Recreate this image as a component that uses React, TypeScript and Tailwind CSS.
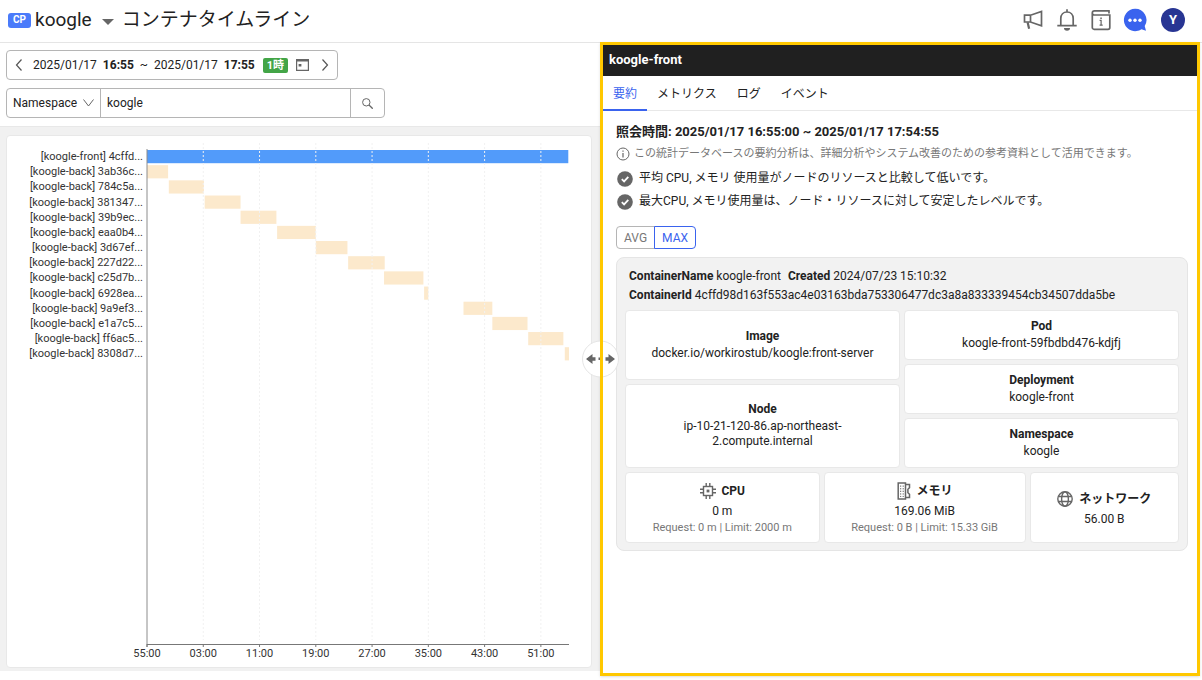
import { useState } from 'react';
import type { ReactNode } from 'react';

interface Bar {
  label: string;
  start: number;
  end: number;
  front?: boolean;
}

// start / end are minutes from 16:55
const bars: Bar[] = [
  { label: '[koogle-front] 4cffd...', start: 0, end: 59.9, front: true },
  { label: '[koogle-back] 3ab36c...', start: 0, end: 3 },
  { label: '[koogle-back] 784c5a...', start: 3.1, end: 8.1 },
  { label: '[koogle-back] 381347...', start: 8.2, end: 13.3 },
  { label: '[koogle-back] 39b9ec...', start: 13.3, end: 18.4 },
  { label: '[koogle-back] eaa0b4...', start: 18.5, end: 24 },
  { label: '[koogle-back] 3d67ef...', start: 24, end: 28.5 },
  { label: '[koogle-back] 227d22...', start: 28.6, end: 33.8 },
  { label: '[koogle-back] c25d7b...', start: 33.7, end: 39.3 },
  { label: '[koogle-back] 6928ea...', start: 39.4, end: 40 },
  { label: '[koogle-back] 9a9ef3...', start: 45, end: 49.1 },
  { label: '[koogle-back] e1a7c5...', start: 49.1, end: 54.1 },
  { label: '[koogle-back] ff6ac5...', start: 54.2, end: 59.2 },
  { label: '[koogle-back] 8308d7...', start: 59.4, end: 60 },
];

const ticks = ['55:00', '03:00', '11:00', '19:00', '27:00', '35:00', '43:00', '51:00'];
const tabs = ['要約', 'メトリクス', 'ログ', 'イベント'];

const PLOT_LEFT = 140;
const PLOT_WIDTH = 422;
const AXIS_Y = 508;
const ROW = 15.17;

const toX = (minutes: number) => PLOT_LEFT + (minutes / 60) * PLOT_WIDTH;

function TimelineChart() {
  return (
    <svg viewBox="0 0 584 531" className="block w-full" role="img" aria-label="コンテナタイムライン">
      {bars.map((bar, i) => (
        <g key={bar.label}>
          <text x="136" y={24 + i * ROW} textAnchor="end" fontSize="11" fill="#333">
            {bar.label}
          </text>
          <rect
            x={toX(bar.start)}
            y={14 + i * ROW}
            width={toX(bar.end) - toX(bar.start)}
            height="13.2"
            fill={bar.front ? '#529bfa' : '#fce9cc'}
          />
        </g>
      ))}
      <path d={`M${PLOT_LEFT} 13V${AXIS_Y + 3}`} stroke="#8c8c8c" />
      <path d={`M${PLOT_LEFT} ${AXIS_Y + 0.5}H${PLOT_LEFT + PLOT_WIDTH}`} stroke="#777" />
      {ticks.map((tick, i) => {
        const x = toX(i * 8);
        return (
          <g key={tick}>
            {i > 0 && <path d={`M${x} 7V${AXIS_Y - 4}`} stroke="#f1f1f1" strokeDasharray="2 2" />}
            <path d={`M${x} ${AXIS_Y}v3`} stroke="#777" />
            <text x={x} y="521" textAnchor="middle" fontSize="11" fill="#333">
              {tick}
            </text>
          </g>
        );
      })}
    </svg>
  );
}

function MegaphoneIcon() {
  return (
    <svg width="24" height="24" viewBox="0 0 24 24" fill="none" stroke="#666" strokeWidth="1.7">
      <path d="M3.500 7.200h6L20.500 3.500v14.200L9.500 14h-6zM9.500 7.200V14" />
      <path d="M6.600 14.200l1.500 6.600" strokeWidth="2.200" />
    </svg>
  );
}

function BellIcon() {
  return (
    <svg width="24" height="24" viewBox="0 0 24 24" fill="none" stroke="#666" strokeWidth="1.7">
      <path d="M2.300 17.700h19.400M5.800 17.700v-7.200c0-3.800 2.600-6.500 6.200-6.500s6.200 2.700 6.200 6.500v7.200M12 4V1.300" />
      <path d="M9 20h6a3 2.800 0 0 1-6 0z" fill="#666" stroke="none" />
    </svg>
  );
}

function GuideIcon() {
  return (
    <svg width="24" height="24" viewBox="0 0 24 24" fill="none" stroke="#666" strokeWidth="1.700">
      <path d="M20.800 2.800H5.500a2.200 2.200 0 0 0-2.200 2.200v14.500a1.800 1.800 0 0 0 1.800 1.800h13.900a1.800 1.800 0 0 0 1.800-1.800V7H5.200a2 2 0 0 1-1.900-2M20 3v2.500" />
      <path d="M10.600 12.300h1.500v4.500M10.600 17.100h3.100" strokeWidth="1.200" />
      <path d="M11.300 9.600h1.500v1.400h-1.500z" fill="#666" stroke="none" />
    </svg>
  );
}

function ChatIcon() {
  return (
    <svg width="24" height="24" viewBox="0 0 24 24">
      <path d="M12 .8a11.200 11.200 0 1 0 6.500 20.400l4.500 1.500-1.300-4.700A11.200 11.200 0 0 0 12 .8z" fill="#3a63ee" />
      <g fill="#fff">
        <circle cx="7" cy="12.300" r="1.700" />
        <circle cx="12" cy="12.300" r="1.700" />
        <circle cx="17" cy="12.300" r="1.700" />
      </g>
    </svg>
  );
}

function Chevron({ d, label }: { d: string; label: string }) {
  return (
    <button aria-label={label} className="flex items-center">
      <svg width="8" height="14" viewBox="0 0 8 14" fill="none" stroke="#555" strokeWidth="1.200">
        <path d={d} />
      </svg>
    </button>
  );
}

function CheckIcon() {
  return (
    <svg width="16" height="16" viewBox="0 0 16 16" className="shrink-0">
      <circle cx="8" cy="8" r="7.800" fill="#666" />
      <path d="M4.800 8.200l2.300 2.200 4.200-4.500" fill="none" stroke="#fff" strokeWidth="1.800" />
    </svg>
  );
}

function CpuIcon() {
  return (
    <svg width="16" height="16" viewBox="0 0 16 16" fill="none" stroke="#666" strokeWidth="1.400">
      <rect x="3.500" y="3.500" width="9" height="9" />
      <path d="M6.200 0v3.500M9.800 0v3.500M6.200 12.500V16M9.800 12.500V16M0 6.200h3.500M0 9.800h3.500M12.500 6.200H16M12.500 9.800H16" />
      <path d="M6.600 6.600h2.800v2.800H6.600z" fill="#666" stroke="none" />
    </svg>
  );
}

function MemoryIcon() {
  return (
    <svg width="14" height="18" viewBox="0 0 14 18" fill="none" stroke="#666" strokeWidth="1.500">
      <path d="M1.200 1h7.300v16H1.200zM8.500 2.500h4v3.200l-1.600 1.600v3.400l1.600 1.600v3.200h-4" />
      <path d="M3.700 3.500v11.500M6.200 3.500v11.500" strokeDasharray="1.300 1.300" strokeWidth="1" />
    </svg>
  );
}

function NetworkIcon() {
  return (
    <svg width="16" height="16" viewBox="0 0 16 16" fill="none" stroke="#666" strokeWidth="1.400">
      <circle cx="8" cy="8" r="7.200" />
      <ellipse cx="8" cy="8" rx="3.400" ry="7.200" />
      <path d="M1.300 5.500h13.400M1.300 10.500h13.400" />
    </svg>
  );
}

function InfoCard({ title, value }: { title: string; value: string }) {
  return (
    <div className="flex flex-auto flex-col items-center justify-center rounded-sm border border-[#e8e8e8] bg-white px-2 py-2 text-center text-xs leading-[15px]">
      <h3 className="mb-0.5 font-bold">{title}</h3>
      <p className="max-w-60">{value}</p>
    </div>
  );
}

function UsageCard({ icon, title, value, note }: { icon: ReactNode; title: string; value: string; note?: string }) {
  return (
    <div className="flex flex-auto flex-col items-center justify-center rounded-sm border border-[#e8e8e8] bg-white py-1.5 text-xs">
      <h3 className="flex h-[23px] items-center gap-1.5 font-bold">
        {icon}
        {title}
      </h3>
      <p className="leading-[18px]">{value}</p>
      {note && <p className="text-[11px] leading-4 text-[#777]">{note}</p>}
    </div>
  );
}

export default function App() {
  const [tab, setTab] = useState('要約');
  const [mode, setMode] = useState('MAX');
  const [field, setField] = useState('Namespace');
  const [keyword, setKeyword] = useState('koogle');

  return (
    <div lang="ja" className="flex min-h-screen flex-col bg-white font-[Roboto,'Noto_Sans_CJK_JP',sans-serif] text-xs text-[#222]">
      {/* Header */}
      <header className="flex h-[43px] items-center border-b border-[#e5e5e5] pr-[17px] pb-0.5 pl-2">
        <button className="flex items-center">
          <span className="flex h-[15px] w-[23px] items-center justify-center rounded-[3px] bg-[#4a7bfa] text-[10px] font-bold text-white">
            CP
          </span>
          <span className="ml-1 text-[19px] leading-6">koogle</span>
          <svg width="12" height="6" viewBox="0 0 12 6" className="mt-1 ml-2.5">
            <path d="M0 0h12L6 6z" fill="#666" />
          </svg>
        </button>
        <h1 className="ml-2 text-[19px] leading-6">コンテナタイムライン</h1>
        <div className="ml-auto flex items-center gap-2.5">
          <button aria-label="お知らせ"><MegaphoneIcon /></button>
          <button aria-label="通知"><BellIcon /></button>
          <button aria-label="ガイド"><GuideIcon /></button>
          <button aria-label="チャット"><ChatIcon /></button>
          <button className="ml-1 flex size-6 items-center justify-center rounded-full bg-[#283593] text-[13px] font-bold text-white">
            Y
          </button>
        </div>
      </header>

      <main className="grid flex-1 grid-cols-2 pr-0.5">
        {/* Timeline */}
        <section className="mb-[9px] flex min-w-0 flex-col bg-[#f1f1f1]">
          <div className="flex flex-col items-start gap-2 border-b border-[#e8e8e8] bg-white px-1.5 pt-[7px] pb-2">
            <div className="flex h-[30px] items-center rounded-sm border border-[#b5b5b5] px-2">
              <Chevron d="M6.500 1.500L1.500 7l5 5.500" label="前へ" />
              <span className="ml-2.5">2025/01/17</span>
              <b className="ml-1.5">16:55</b>
              <span className="mx-1.5">~</span>
              <span>2025/01/17</span>
              <b className="ml-1.5">17:55</b>
              <span className="ml-2 rounded-xs bg-[#43a547] px-1 text-[11px] leading-[15px] font-bold text-white">1時</span>
              <button aria-label="カレンダー" className="ml-2">
                <svg width="13" height="12" viewBox="0 0 13 12" fill="none" stroke="#666" strokeWidth="1.200">
                  <path d="M.6.6h11.800v10.800H.6z" />
                  <path d="M0 0h13v2.600H0zM2.600 5h2.800v2.600H2.600z" fill="#666" stroke="none" />
                </svg>
              </button>
              <span className="ml-3 flex">
                <Chevron d="M1.500 1.500l5 5.500-5 5.500" label="次へ" />
              </span>
            </div>
            <form
              className="flex h-[30px] w-[379px] max-w-full rounded-sm border border-[#b5b5b5]"
              onSubmit={(e) => e.preventDefault()}
            >
              <div className="relative flex border-r border-[#b5b5b5]">
                <select
                  aria-label="検索項目"
                  value={field}
                  onChange={(e) => setField(e.target.value)}
                  className="w-[93px] appearance-none pl-1.5 outline-none"
                >
                  <option>Namespace</option>
                </select>
                <svg
                  width="11"
                  height="8"
                  viewBox="0 0 11 8"
                  fill="none"
                  stroke="#666"
                  className="pointer-events-none absolute top-2.5 right-1.5"
                >
                  <path d="M.5.5l5 6.500 5-6.500" />
                </svg>
              </div>
              <input
                aria-label="検索語"
                value={keyword}
                onChange={(e) => setKeyword(e.target.value)}
                className="min-w-0 flex-1 px-1.5 outline-none"
              />
              <button aria-label="検索" className="flex w-[34px] items-center justify-center border-l border-[#b5b5b5]">
                <svg width="11" height="11" viewBox="0 0 11 11" fill="none" stroke="#666">
                  <circle cx="4.300" cy="4.300" r="3.700" />
                  <path d="M7 7l3.700 3.700" strokeWidth="1.300" />
                </svg>
              </button>
            </form>
          </div>
          <div className="pt-2 pr-2 pb-[3px] pl-1.5">
            <div className="rounded-sm border border-[#e8e8e8] bg-white">
              <TimelineChart />
            </div>
          </div>
        </section>

        {/* Detail panel */}
        <aside className="relative -mt-px mb-1 flex min-w-0 flex-col bg-white p-[3px] shadow">
          <div className="pointer-events-none absolute inset-0 z-20 border-3 border-[#ffc800]" />
          <button
            aria-label="幅を変更"
            className="absolute top-1/2 -left-[18px] z-10 flex size-[37px] -translate-y-1/2 items-center justify-center rounded-full border border-[#e5e5e5] bg-white"
          >
            <svg width="29" height="11" viewBox="0 0 29 11" fill="#666">
              <path d="M0 5.500L6.500.5v3.300h3v3.400h-3v3.300zM29 5.500L22.500.5v3.300h-3v3.400h3v3.300zM12.500 4h4v2.600h-4z" />
            </svg>
          </button>

          <h2 className="bg-[#202020] px-1.5 pb-px text-[13px] leading-[30px] font-bold text-white">koogle-front</h2>
          <div role="tablist" className="flex border-b border-[#e8e8e8]">
            {tabs.map((name) => (
              <button
                key={name}
                role="tab"
                aria-selected={tab === name}
                onClick={() => setTab(name)}
                className={`-mb-px h-[35px] border-b-2 px-2.5 pt-0.5 ${
                  tab === name ? 'border-[#3a63ee] text-[#3a63ee]' : 'border-transparent'
                }`}
              >
                {name}
              </button>
            ))}
          </div>

          <div className="pt-[11px] pr-[9px] pb-4 pl-[13px]">
            <p className="text-[13px] leading-5 font-bold">照会時間: 2025/01/17 16:55:00 ~ 2025/01/17 17:54:55</p>
            <p className="mt-0.5 flex items-center gap-1 text-[11px] leading-5 text-[#777]">
              <svg width="14" height="14" viewBox="0 0 14 14" fill="none" stroke="#666" className="shrink-0">
                <circle cx="7" cy="7" r="6" />
                <path d="M7 6v4.500M7 3.500v1.300" strokeWidth="1.200" />
              </svg>
              この統計データベースの要約分析は、詳細分析やシステム改善のための参考資料として活用できます。
            </p>
            <ul className="mt-[3px] px-px leading-[23px]">
              <li className="flex items-center gap-1.5">
                <CheckIcon />
                平均 CPU, メモリ 使用量がノードのリソースと比較して低いです。
              </li>
              <li className="flex items-center gap-1.5">
                <CheckIcon />
                最大CPU, メモリ使用量は、ノード・リソースに対して安定したレベルです。
              </li>
            </ul>

            <div className="mt-[13px] flex">
              {['AVG', 'MAX'].map((name) => (
                <button
                  key={name}
                  aria-pressed={mode === name}
                  onClick={() => setMode(name)}
                  className={`h-[23px] border px-[7px] first:rounded-l-sm last:-ml-px last:rounded-r-sm ${
                    mode === name ? 'relative border-[#3a63ee] text-[#3a63ee]' : 'border-[#b5b5b5] text-[#777]'
                  }`}
                >
                  {name}
                </button>
              ))}
            </div>

            <div className="mt-2 rounded-lg border border-[#e5e5e5] bg-[#f2f2f2] px-2 pt-2 pb-[7px]">
              <div className="px-1 pt-px pb-[5px] leading-[19px] break-all">
                <p>
                  <b>ContainerName</b> koogle-front <b className="ml-1">Created</b> 2024/07/23 15:10:32
                </p>
                <p>
                  <b>ContainerId</b> 4cffd98d163f553ac4e03163bda753306477dc3a8a833339454cb34507dda5be
                </p>
              </div>
              <div className="grid grid-cols-2 gap-1">
                <div className="flex flex-col gap-1">
                  <InfoCard title="Image" value="docker.io/workirostub/koogle:front-server" />
                  <InfoCard title="Node" value="ip-10-21-120-86.ap-northeast-2.compute.internal" />
                </div>
                <div className="flex flex-col gap-1">
                  <InfoCard title="Pod" value="koogle-front-59fbdbd476-kdjfj" />
                  <InfoCard title="Deployment" value="koogle-front" />
                  <InfoCard title="Namespace" value="koogle" />
                </div>
              </div>
              <div className="mt-1 flex gap-1">
                <UsageCard icon={<CpuIcon />} title="CPU" value="0 m" note="Request: 0 m | Limit: 2000 m" />
                <UsageCard icon={<MemoryIcon />} title="メモリ" value="169.06 MiB" note="Request: 0 B | Limit: 15.33 GiB" />
                <UsageCard icon={<NetworkIcon />} title="ネットワーク" value="56.00 B" />
              </div>
            </div>
          </div>
        </aside>
      </main>
    </div>
  );
}
